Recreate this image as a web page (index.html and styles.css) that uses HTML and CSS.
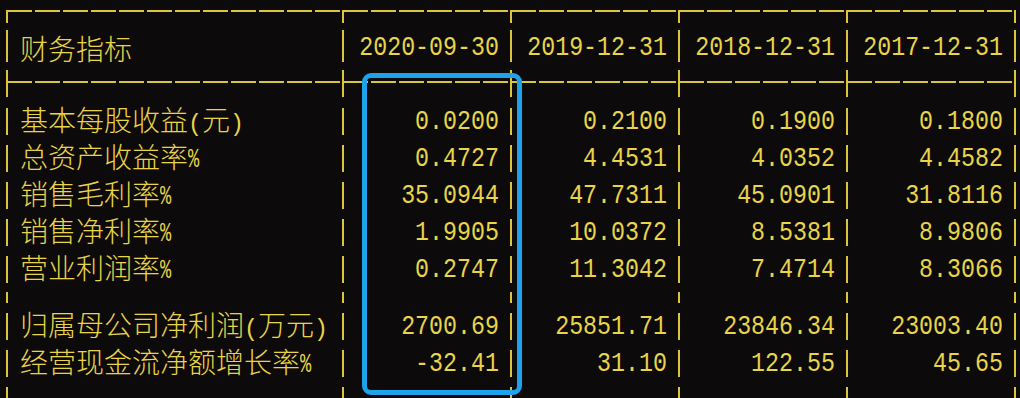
FILE: index.html
```html
<!DOCTYPE html>
<html lang="zh-CN">
<head>
<meta charset="utf-8">
<title>财务指标</title>
<link rel="stylesheet" href="styles.css">
</head>
<body>
<div class="screen">
  <div class="row rule rule-top">
    <i class="tick"></i><span></span><i class="tick"></i><span></span><i class="tick"></i><span></span><i class="tick"></i><span></span><i class="tick"></i><span></span><i class="tick"></i>
  </div>
  <div class="row head">
    <i class="bar"></i><span class="label">财务指标</span>
    <i class="bar"></i><span class="val"><b>2020-09-30</b></span>
    <i class="bar"></i><span class="val"><b>2019-12-31</b></span>
    <i class="bar"></i><span class="val"><b>2018-12-31</b></span>
    <i class="bar"></i><span class="val"><b>2017-12-31</b></span>
    <i class="bar"></i>
  </div>
  <div class="row rule rule-mid">
    <i class="tick"></i><span></span><i class="tick"></i><span></span><i class="tick"></i><span></span><i class="tick"></i><span></span><i class="tick"></i><span></span><i class="tick"></i>
  </div>

  <div class="row data">
    <i class="bar"></i><span class="label">基本每股收益<span class="a">(</span>元<span class="a">)</span></span>
    <i class="bar"></i><span class="val"><b>0.0200</b></span>
    <i class="bar"></i><span class="val"><b>0.2100</b></span>
    <i class="bar"></i><span class="val"><b>0.1900</b></span>
    <i class="bar"></i><span class="val"><b>0.1800</b></span>
    <i class="bar"></i>
  </div>
  <div class="row data">
    <i class="bar"></i><span class="label">总资产收益率<span class="a pct">%</span></span>
    <i class="bar"></i><span class="val"><b>0.4727</b></span>
    <i class="bar"></i><span class="val"><b>4.4531</b></span>
    <i class="bar"></i><span class="val"><b>4.0352</b></span>
    <i class="bar"></i><span class="val"><b>4.4582</b></span>
    <i class="bar"></i>
  </div>
  <div class="row data">
    <i class="bar"></i><span class="label">销售毛利率<span class="a pct">%</span></span>
    <i class="bar"></i><span class="val"><b>35.0944</b></span>
    <i class="bar"></i><span class="val"><b>47.7311</b></span>
    <i class="bar"></i><span class="val"><b>45.0901</b></span>
    <i class="bar"></i><span class="val"><b>31.8116</b></span>
    <i class="bar"></i>
  </div>
  <div class="row data">
    <i class="bar"></i><span class="label">销售净利率<span class="a pct">%</span></span>
    <i class="bar"></i><span class="val"><b>1.9905</b></span>
    <i class="bar"></i><span class="val"><b>10.0372</b></span>
    <i class="bar"></i><span class="val"><b>8.5381</b></span>
    <i class="bar"></i><span class="val"><b>8.9806</b></span>
    <i class="bar"></i>
  </div>
  <div class="row data">
    <i class="bar"></i><span class="label">营业利润率<span class="a pct">%</span></span>
    <i class="bar"></i><span class="val"><b>0.2747</b></span>
    <i class="bar"></i><span class="val"><b>11.3042</b></span>
    <i class="bar"></i><span class="val"><b>7.4714</b></span>
    <i class="bar"></i><span class="val"><b>8.3066</b></span>
    <i class="bar"></i>
  </div>
  <div class="row blank">
    <i class="bar"></i><span></span><i class="bar"></i><span></span><i class="bar"></i><span></span><i class="bar"></i><span></span><i class="bar"></i><span></span><i class="bar"></i>
  </div>
  <div class="row data">
    <i class="bar"></i><span class="label">归属母公司净利润<span class="a">(</span>万元<span class="a">)</span></span>
    <i class="bar"></i><span class="val"><b>2700.69</b></span>
    <i class="bar"></i><span class="val"><b>25851.71</b></span>
    <i class="bar"></i><span class="val"><b>23846.34</b></span>
    <i class="bar"></i><span class="val"><b>23003.40</b></span>
    <i class="bar"></i>
  </div>
  <div class="row data">
    <i class="bar"></i><span class="label">经营现金流净额增长率<span class="a pct">%</span></span>
    <i class="bar"></i><span class="val"><b>-32.41</b></span>
    <i class="bar"></i><span class="val"><b>31.10</b></span>
    <i class="bar"></i><span class="val"><b>122.55</b></span>
    <i class="bar"></i><span class="val"><b>45.65</b></span>
    <i class="bar"></i>
  </div>
  <div class="row data">
    <i class="bar"></i><span></span><i class="bar"></i><span></span><i class="bar"></i><span></span><i class="bar"></i><span></span><i class="bar"></i><span></span><i class="bar"></i>
  </div>

  <div class="highlight"></div>
</div>
</body>
</html>
```

FILE: styles.css
```css
html, body {
  margin: 0;
  padding: 0;
  background: #0c0a0a;
  overflow: hidden;
}

.screen {
  position: relative;
  width: 1020px;
  height: 398px;
  overflow: hidden;
  color: #e9d44a;
}

.row {
  display: grid;
  grid-template-columns: 2px 334px 2px 166px 2px 166px 2px 166px 2px 166px 2px;
  padding-left: 6px;
  align-items: center;
}

.bar,
.tick {
  display: block;
  width: 2px;
  background: #dcc53e;
  align-self: start;
}

/* dashed rules */
.rule {
  background-image: repeating-linear-gradient(90deg, #dcc53e 0 25px, transparent 25px 28px);
  background-repeat: no-repeat;
  background-size: 1008px 2px;
}

.rule-top {
  height: 24px;
  background-position: 7px 10px;
}

.rule-top .tick {
  margin-top: 10px;
  height: 13px;
}

.rule-mid {
  height: 35px;
  background-position: 7px 13px;
}

.rule-mid .tick {
  margin-top: 2px;
  height: 27px;
}

/* header */
.head {
  height: 44px;
}

.head .bar {
  margin-top: 6px;
  height: 32px;
}

.head .label,
.head .val {
  padding-top: 4px;
}

/* data */
.data {
  height: 37px;
}

.data .bar {
  margin-top: 5px;
  height: 27px;
}

.blank {
  height: 20px;
}

.blank .bar {
  margin-top: 4px;
  height: 11px;
}

.label {
  font-family: "Noto Sans CJK SC", sans-serif;
  font-size: 28px;
  font-weight: 300;
  line-height: 30px;
  padding-left: 12px;
  white-space: nowrap;
}

.a {
  font-family: "Liberation Mono", "DejaVu Sans Mono", monospace;
  font-size: 23.3px;
}

.pct {
  display: inline-block;
  transform: scale(0.8, 1.15);
  transform-origin: left bottom;
}

.val {
  font-family: "Liberation Mono", "DejaVu Sans Mono", monospace;
  font-size: 23.3px;
  line-height: 30px;
  text-align: right;
  padding-right: 11px;
  white-space: nowrap;
}

.val b {
  display: inline-block;
  font-weight: normal;
  transform: scaleY(1.18);
}

.highlight {
  position: absolute;
  left: 362px;
  top: 73px;
  width: 160px;
  height: 322px;
  box-sizing: border-box;
  border: 5px solid #1ea2ea;
  border-radius: 9px;
}
```
